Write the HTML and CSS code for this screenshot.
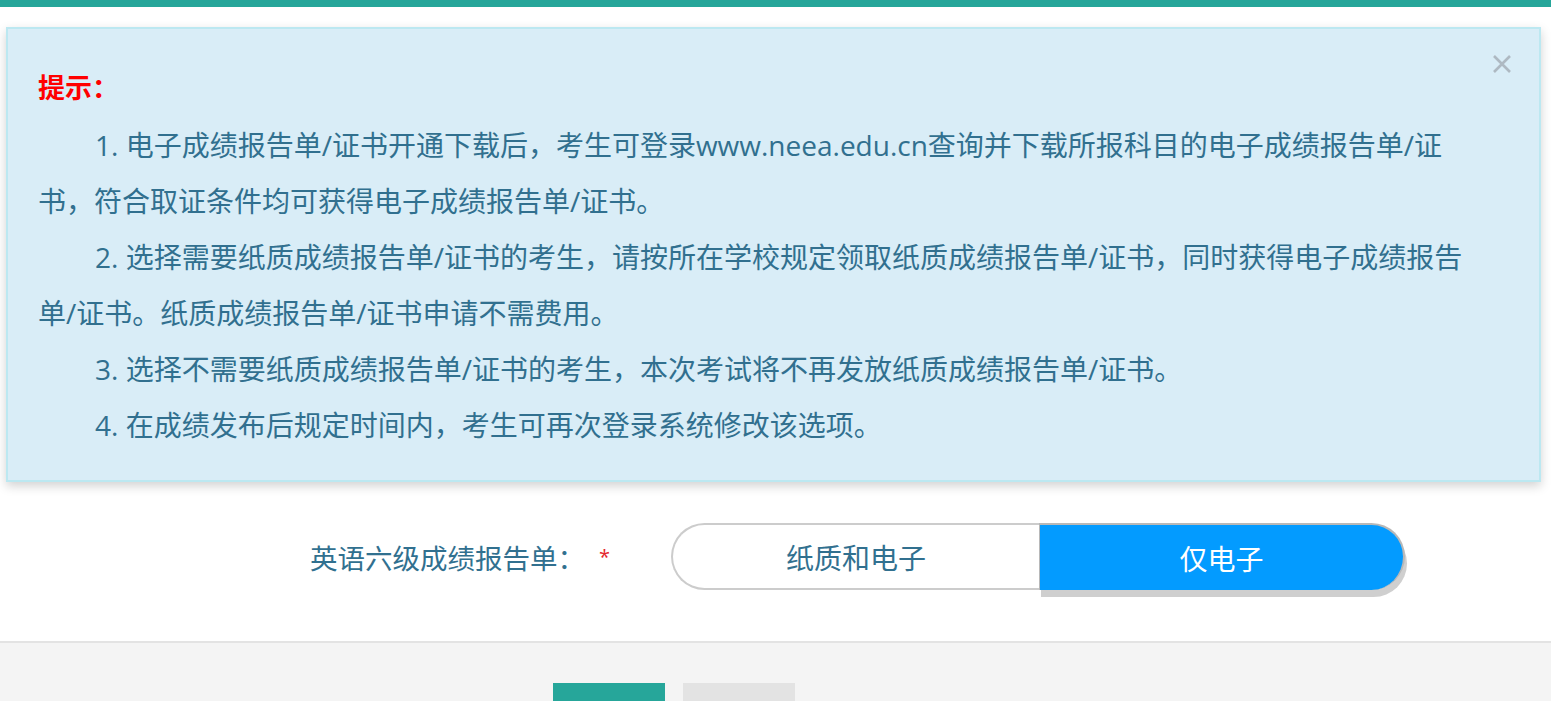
FILE: index.html
```html
<!DOCTYPE html>
<html lang="zh-CN">
<head>
<meta charset="utf-8">
<title>成绩报告单</title>
<link rel="stylesheet" href="styles.css">
</head>
<body>
<div class="topbar"></div>
<div class="main">
  <div class="alert">
    <button class="close" type="button" aria-label="close">
      <svg width="20" height="20" viewBox="0 0 20 20"><path d="M2 2 L18 18 M18 2 L2 18" stroke="#aeb9c2" stroke-width="2.6" fill="none"/></svg>
    </button>
    <div class="alert-title">提示：</div>
    <p class="tip">1. 电子成绩报告单/证书开通下载后，考生可登录www.neea.edu.cn查询并下载所报科目的电子成绩报告单/证书，符合取证条件均可获得电子成绩报告单/证书。</p>
    <p class="tip">2. 选择需要纸质成绩报告单/证书的考生，请按所在学校规定领取纸质成绩报告单/证书，同时获得电子成绩报告单/证书。纸质成绩报告单/证书申请不需费用。</p>
    <p class="tip">3. 选择不需要纸质成绩报告单/证书的考生，本次考试将不再发放纸质成绩报告单/证书。</p>
    <p class="tip">4. 在成绩发布后规定时间内，考生可再次登录系统修改该选项。</p>
  </div>
  <div class="form-row">
    <label class="label">英语六级成绩报告单：</label>
    <span class="req">*</span>
    <div class="toggle">
      <div class="opt opt-left">纸质和电子</div>
      <div class="opt opt-right active">仅电子</div>
    </div>
  </div>
</div>
<div class="footer">
  <div class="btns">
    <div class="btn btn-primary"></div>
    <div class="btn btn-default"></div>
  </div>
</div>
</body>
</html>
```

FILE: styles.css
```css
* { box-sizing: border-box; }
html, body {
  margin: 0;
  padding: 0;
  background: #fff;
  font-family: "Open Sans", "Noto Sans CJK SC", sans-serif;
  overflow: hidden;
}
.topbar {
  height: 7px;
  background: #26a69a;
}
.main {
  padding: 20px 10px 0 6px;
  height: 634px;
}
.alert {
  position: relative;
  background: #d9edf7;
  border: 2px solid #bce8f1;
  box-shadow: 0 4px 10px rgba(0, 0, 0, 0.18);
  padding: 30px 58px 27px 30px;
  color: #31708f;
  font-size: 28px;
  line-height: 56px;
}
.close {
  position: absolute;
  top: 25px;
  right: 27px;
  background: none;
  border: 0;
  padding: 0;
  width: 20px;
  height: 20px;
  cursor: pointer;
}
.close svg { display: block; }
.alert-title {
  color: #ff0000;
  font-weight: bold;
  font-size: 27px;
  line-height: 58px;
}
.tip {
  margin: 0;
  text-indent: 57px;
}
.form-row {
  display: flex;
  align-items: center;
  margin-top: 41px;
  padding-left: 304px;
}
.label {
  font-size: 27.5px;
  color: #31708f;
}
.req {
  color: #e4262c;
  font-size: 20px;
  margin-left: 14px;
  margin-right: 61px;
}
.toggle {
  display: flex;
  height: 67px;
}
.opt {
  width: 368px;
  display: flex;
  align-items: center;
  justify-content: center;
  font-size: 28px;
}
.opt-left {
  color: #31708f;
  background: #fff;
  border: 2px solid #cccccc;
  border-right: 0;
  border-radius: 34px 0 0 34px;
}
.opt-right {
  width: 366px;
  color: #fff;
  background: #039bff;
  border-top: 2px solid #b8b8b8;
  border-right: 2px solid #b8b8b8;
  border-left: 1px solid #b8b8b8;
  border-radius: 0 34px 34px 0;
  box-shadow: 2px 7px 0 #cfcfcf;
}
.footer {
  border-top: 2px solid #e3e3e3;
  background: #f4f4f4;
  height: 80px;
  padding-top: 40px;
}
.btns {
  display: flex;
  gap: 18px;
  padding-left: 553px;
}
.btn {
  width: 112px;
  height: 40px;
}
.btn-primary { background: #26a69a; }
.btn-default { background: #e3e3e3; }
```
